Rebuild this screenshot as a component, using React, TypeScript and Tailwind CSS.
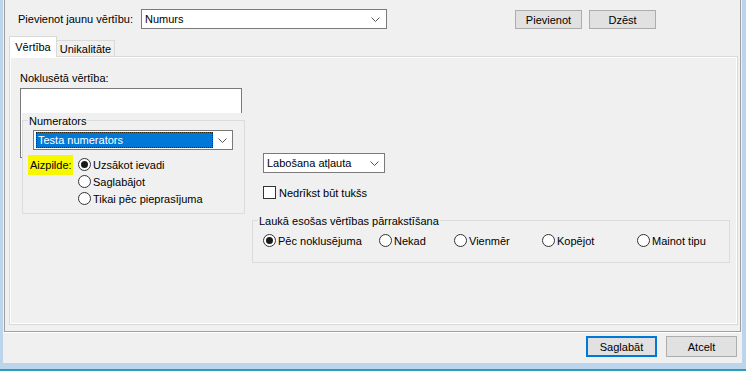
import React from 'react';

const Chevron = () => (
  <svg width="9" height="5" viewBox="0 0 9 5" className="shrink-0">
    <polyline points="0.5,0.5 4.5,4.5 8.5,0.5" fill="none" stroke="#555" strokeWidth="1" />
  </svg>
);

const Radio = ({ label, checked, className = '' }: { label: string; checked?: boolean; className?: string }) => (
  <div className={`flex h-[17px] items-center ${className}`}>
    <span className="flex h-[13px] w-[13px] shrink-0 items-center justify-center rounded-full border border-[#333] bg-white">
      {checked && <span className="h-[7px] w-[7px] rounded-full bg-[#1a1a1a]" />}
    </span>
    <span className="ml-[2px] whitespace-nowrap">{label}</span>
  </div>
);

const Button = ({ label, primary }: { label: string; primary?: boolean }) => (
  <div
    className={`flex h-[21px] w-[71px] items-center justify-center bg-[#e1e1e1] ${
      primary ? 'border-2 border-[#0078d7]' : 'border border-[#adadad]'
    }`}
  >
    {label}
  </div>
);

export default function App() {
  return (
    <div className="flex h-[371px] w-[746px] flex-col bg-[#bcd4ec] font-['Liberation_Sans',Arial,sans-serif] text-[11px] leading-[16px] text-black">
      <div className="flex min-h-0 flex-1 pl-[3px] pr-[4px]">
        <div className="flex flex-1 flex-col bg-[#f0f0f0]">
          {/* upper part */}
          <div className="mx-[1px] flex flex-col border-x border-b border-[#a0a0a0]">
            {/* top row */}
            <div className="flex h-[20px] items-start pl-[13px] pt-0 mt-[9px]">
              <div className="flex h-[20px] w-[123px] items-center whitespace-nowrap">Pievienot jaunu vērtību:</div>
              <div className="flex h-[20px] w-[246px] items-center justify-between border border-[#7a7a7a] bg-white pl-[3px] pr-[6px]">
                <span>Numurs</span>
                <Chevron />
              </div>
              <div className="ml-[128px] mt-[1px] flex h-[19px] w-[67px] items-center justify-center border border-[#adadad] bg-[#e1e1e1]">
                Pievienot
              </div>
              <div className="ml-[7px] mt-[1px] flex h-[19px] w-[67px] items-center justify-center border border-[#adadad] bg-[#e1e1e1]">
                Dzēst
              </div>
            </div>

            {/* tabs */}
            <div className="relative z-10 -mb-px mt-[7px] flex h-[21px] items-end pl-[4px]">
              <div className="flex h-[21px] w-[48px] items-center justify-center border-x border-t border-[#d9d9d9] bg-white">
                Vērtība
              </div>
              <div className="-ml-px mb-px flex h-[16px] w-[59px] items-center justify-center border-x border-t border-[#d9d9d9] bg-[#f0f0f0]">
                Unikalitāte
              </div>
            </div>

            {/* tab panel */}
            <div className="mb-[6px] ml-[4px] h-[269px] w-[729px] border border-[#d9d9d9]">
              <div className="flex h-full border border-white pl-[9px] pt-[12px]">
                {/* left column */}
                <div className="flex w-[225px] flex-col">
                  <div className="h-[16px]">Noklusētā vērtība:</div>
                  <div className="mt-[2px] h-[70px] w-[222px] border border-[#7a7a7a] bg-white" />
                  <div className="relative z-10 -mt-[45px] ml-[2px] w-[223px] bg-[#f0f0f0] pt-[7px]">
                    <div className="relative h-[94px] border border-[#dcdcdc] pl-[10px] pt-[9px]">
                      <span className="absolute left-[5px] top-[-8px] bg-[#f0f0f0] px-px">Numerators</span>
                      <div className="flex h-[20px] w-[200px] items-center border border-[#7a7a7a] bg-white pl-[2px] pr-[5px]">
                        <div className="flex h-[16px] w-[177px] items-center border border-dotted border-[#2a2010] bg-[#0078d7] pl-px text-white">
                          Testa numerators
                        </div>
                        <div className="flex flex-1 justify-end">
                          <Chevron />
                        </div>
                      </div>
                      <div className="-ml-[5px] mt-[5px] flex items-start">
                        <div className="flex h-[20px] w-[45px] items-center bg-[#f7f700] pl-[2px]">Aizpilde:</div>
                        <div className="ml-[5px] mt-px flex flex-col">
                          <Radio label="Uzsākot ievadi" checked />
                          <Radio label="Saglabājot" />
                          <Radio label="Tikai pēc pieprasījuma" />
                        </div>
                      </div>
                    </div>
                  </div>
                </div>

                {/* right column */}
                <div className="ml-[7px] mt-[83px] flex flex-col">
                  <div className="ml-[11px] flex h-[20px] w-[122px] items-center justify-between border border-[#7a7a7a] bg-white pl-[3px] pr-[5px]">
                    <span>Labošana atļauta</span>
                    <Chevron />
                  </div>
                  <div className="ml-[11px] mt-[13px] flex h-[13px] items-center">
                    <span className="h-[13px] w-[13px] border border-[#333] bg-white" />
                    <span className="ml-[3px]">Nedrīkst būt tukšs</span>
                  </div>
                  <div className="mt-[14px] pt-[7px]">
                    <div className="relative flex h-[43px] w-[478px] border border-[#dcdcdc] pl-[10px] pt-[11px]">
                      <span className="absolute left-[5px] top-[-8px] bg-[#f0f0f0] px-px">
                        Laukā esošas vērtības pārrakstīšana
                      </span>
                      <Radio label="Pēc noklusējuma" checked className="w-[116px]" />
                      <Radio label="Nekad" className="w-[75px]" />
                      <Radio label="Vienmēr" className="w-[88px]" />
                      <Radio label="Kopējot" className="w-[95px]" />
                      <Radio label="Mainot tipu" />
                    </div>
                  </div>
                </div>
              </div>
            </div>
          </div>

          {/* bottom buttons */}
          <div className="flex flex-1 justify-end gap-[9px] border-t border-white pr-[5px] pt-[3px]">
            <Button label="Saglabāt" primary />
            <Button label="Atcelt" />
          </div>
        </div>
      </div>
      <div className="h-[6px] shrink-0" />
      <div className="h-[2px] shrink-0 bg-[#2d9cb8]" />
    </div>
  );
}
